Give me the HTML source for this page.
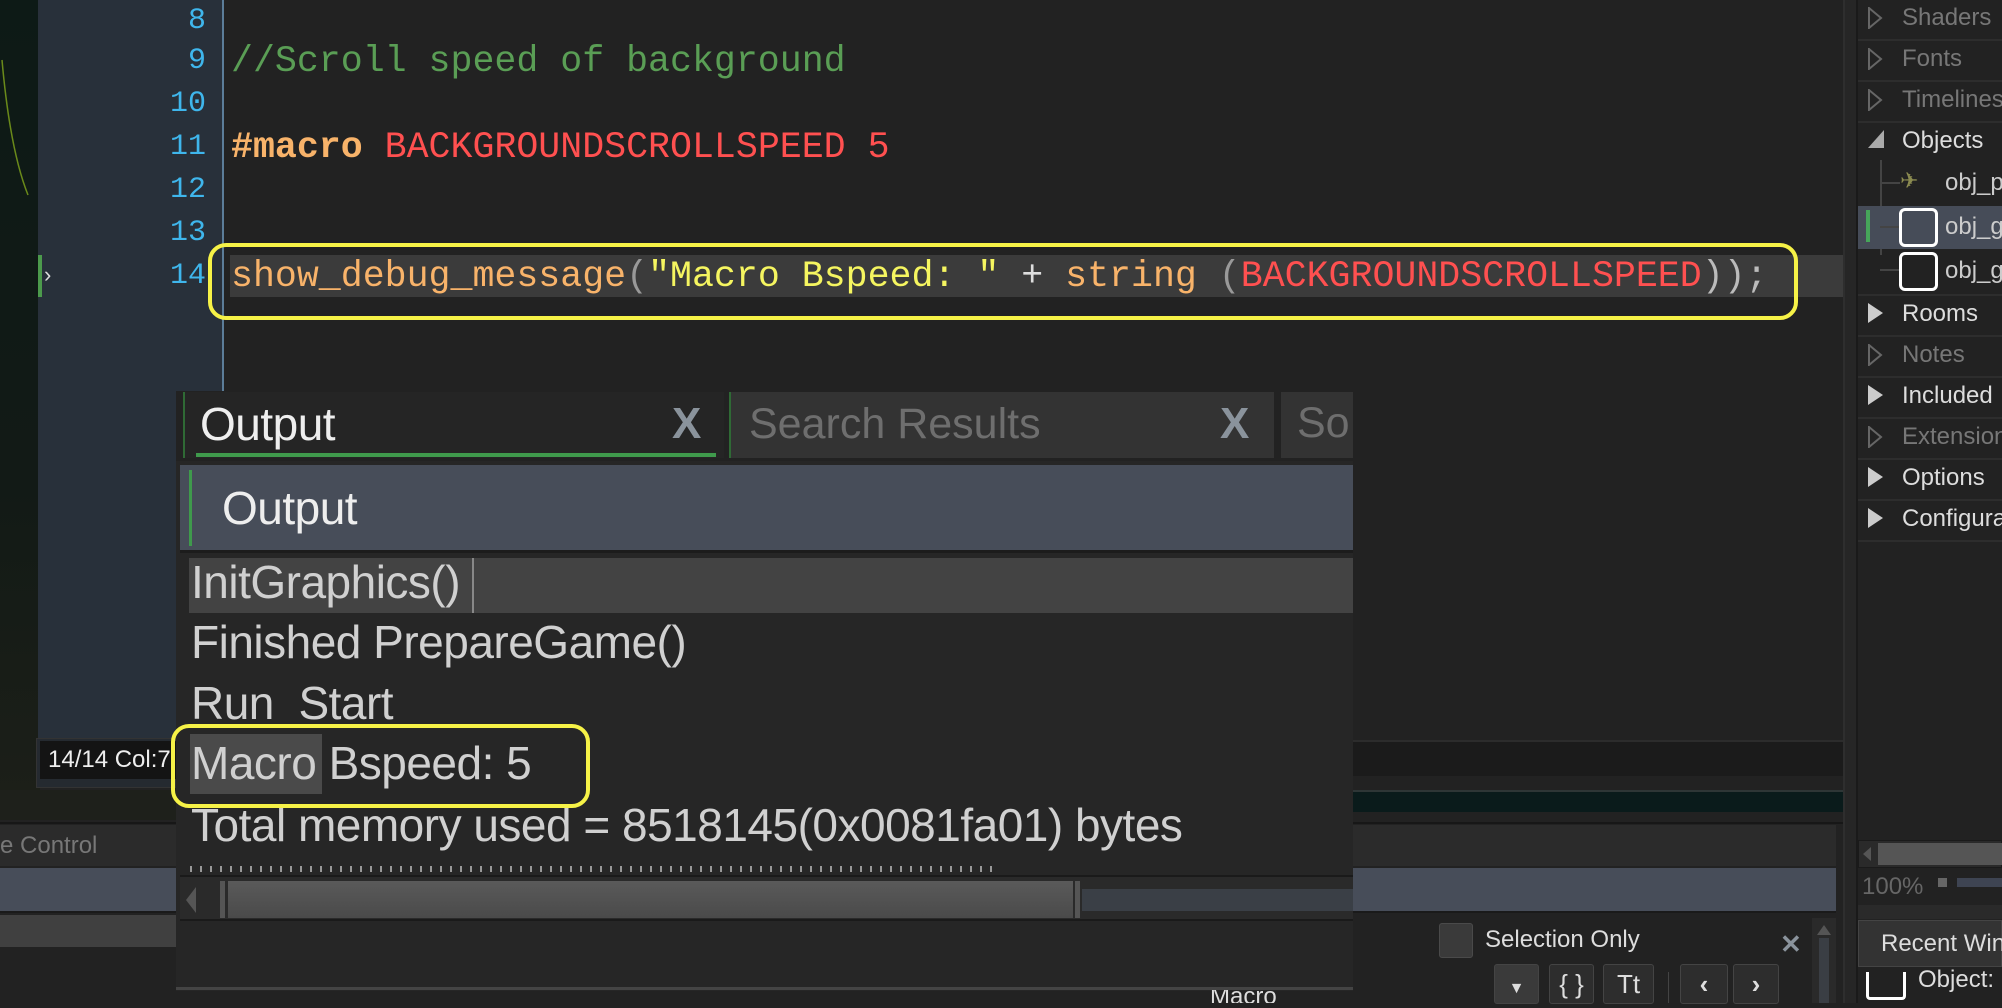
<!DOCTYPE html>
<html><head><meta charset="utf-8"><style>
*{margin:0;padding:0;box-sizing:border-box}
body{width:2002px;height:1003px;overflow:hidden;background:#222;position:relative;font-family:"Liberation Sans",sans-serif}
.a{position:absolute}
.mono{font-family:"Liberation Mono","DejaVu Sans Mono",monospace;font-size:36.6px;white-space:pre}
.ln{position:absolute;left:120px;width:86px;text-align:right;color:#3fb6ec;font-family:"Liberation Mono",monospace;font-size:30px;height:43px;line-height:43px}
.code{position:absolute;left:231px;height:43px;line-height:43px}
.tr{position:absolute;left:1902px;font-size:24px;height:41px;line-height:41px;white-space:nowrap}
.tri{position:absolute;left:1868px;width:0;height:0;border-top:10px solid transparent;border-bottom:10px solid transparent;border-left:15px solid #ccc}
.trio{position:absolute;left:1868px;width:15px;height:20px}
.sep{position:absolute;left:1858px;width:144px;height:2px;background:#2d2d2d}
.ol{position:absolute;left:191px;font-size:46px;color:#d0d0d0;height:60px;line-height:60px;white-space:nowrap;letter-spacing:-0.5px}
.btn{position:absolute;top:964px;height:40px;background:#2d2d2d;border:1px solid #444;border-radius:3px;color:#ddd;font-size:26px;text-align:center;line-height:38px}
</style></head><body>
<div class="a" style="left:0;top:0;width:40px;height:800px;background:linear-gradient(#0d1a16,#121a16 60%,#1c1f18)"></div>
<svg class="a" style="left:0;top:0" width="40" height="200"><path d="M2 60 Q10 150 28 195" stroke="#6a8a1a" stroke-width="1.5" fill="none"/></svg>
<div class="a" style="left:0;top:790px;width:176px;height:30px;background:#1e201b"></div>
<div class="a" style="left:38px;top:0;width:184px;height:745px;background:#28303a"></div>
<div class="a" style="left:222px;top:0;width:2px;height:391px;background:#5c7d98"></div>
<div class="a" style="left:38px;top:255px;width:4px;height:42px;background:#4c9a4c"></div>
<div class="a" style="left:44px;top:262px;color:#ddd;font-size:22px">›</div>
<div class="a" style="left:36px;top:738px;width:140px;height:50px;background:#252a30;border:1px solid #333"></div>
<div class="a" style="left:40px;top:741px;width:136px;height:38px;background:#141414;color:#eee;font-size:24px;line-height:38px;padding-left:8px;white-space:nowrap;overflow:hidden">14/14 Col:7</div>
<div class="ln" style="top:0px">8</div>
<div class="ln" style="top:40px">9</div>
<div class="ln" style="top:83px">10</div>
<div class="ln" style="top:126px">11</div>
<div class="ln" style="top:169px">12</div>
<div class="ln" style="top:212px">13</div>
<div class="ln" style="top:255px">14</div>
<div class="a" style="left:230px;top:255px;width:1613px;height:42px;background:#3b3b3b"></div>
<div class="code mono" style="top:40px;color:#5a9e55">//Scroll speed of background</div>
<div class="code mono" style="top:126px"><span style="color:#f8b36a;font-weight:bold">#macro</span> <span style="color:#ff5050">BACKGROUNDSCROLLSPEED 5</span></div>
<div class="code mono" style="top:255px"><span style="color:#f8b36a">show_debug_message</span><span style="color:#999">(</span><span style="color:#f5f560">"Macro Bspeed: "</span><span style="color:#ddd"> + </span><span style="color:#f8b36a">string</span> <span style="color:#999">(</span><span style="color:#ff5050">BACKGROUNDSCROLLSPEED</span><span style="color:#bbb">));</span></div>
<div class="a" style="left:208px;top:243px;width:1590px;height:77px;border:4px solid #f6f247;border-radius:18px"></div>
<div class="a" style="left:1353px;top:740px;width:490px;height:36px;background:#1b1b1b;border-top:2px solid #2c2c2c"></div>
<div class="a" style="left:1353px;top:790px;width:490px;height:22px;background:#0a1b1b;border-top:2px solid #2e3636"></div>
<div class="a" style="left:0;top:822px;width:1843px;height:2px;background:#171717"></div>
<div class="a" style="left:0;top:825px;width:1836px;height:41px;background:#2b2b2b"></div>
<div class="a" style="left:0;top:831px;color:#777;font-size:24px;line-height:30px">e Control</div>
<div class="a" style="left:0;top:868px;width:1836px;height:45px;background:#474d59;border-bottom:2px solid #1a1a1a"></div>
<div class="a" style="left:0;top:915px;width:176px;height:32px;background:#404040"></div>
<div class="a" style="left:1439px;top:923px;width:34px;height:35px;background:#3a3a3a;border:1px solid #4a4a4a;border-radius:3px"></div>
<div class="a" style="left:1485px;top:925px;color:#ddd;font-size:24px;line-height:30px">Selection Only</div>
<div class="a" style="left:1780px;top:929px;color:#8a939c;font-size:26px;font-weight:bold">✕</div>
<div class="a" style="left:1812px;top:918px;width:24px;height:85px;background:#2a2a2a"></div>
<div class="a" style="left:1817px;top:925px;width:0;height:0;border-left:7px solid transparent;border-right:7px solid transparent;border-bottom:10px solid #555"></div>
<div class="a" style="left:1819px;top:938px;width:10px;height:65px;background:#3a3e44"></div>
<div class="btn" style="left:1494px;width:45px;background:#3a3a3a"><span style="font-size:16px">▼</span></div>
<div class="btn" style="left:1549px;width:45px">{ }</div>
<div class="btn" style="left:1603px;width:51px">Tt</div>
<div class="a" style="left:1668px;top:972px;width:1px;height:31px;background:#444"></div>
<div class="btn" style="left:1680px;width:48px;font-weight:bold">‹</div>
<div class="btn" style="left:1733px;width:46px;font-weight:bold">›</div>
<div class="a" style="left:1843px;top:0;width:15px;height:1003px;background:#262626;border-left:2px solid #2e2e2e;border-right:2px solid #1a1a1a"></div>
<div class="a" style="left:1858px;top:0;width:144px;height:1003px;background:#222"></div>
<div class="trio" style="top:7px"><svg width="15" height="22"><path d="M1 1 L13 11 L1 21 Z" fill="none" stroke="#666" stroke-width="2"/></svg></div>
<div class="tr" style="top:-3px;color:#777">Shaders</div><div class="sep" style="top:39px"></div>
<div class="trio" style="top:48px"><svg width="15" height="22"><path d="M1 1 L13 11 L1 21 Z" fill="none" stroke="#666" stroke-width="2"/></svg></div>
<div class="tr" style="top:38px;color:#777">Fonts</div><div class="sep" style="top:80px"></div>
<div class="trio" style="top:89px"><svg width="15" height="22"><path d="M1 1 L13 11 L1 21 Z" fill="none" stroke="#666" stroke-width="2"/></svg></div>
<div class="tr" style="top:79px;color:#777">Timelines</div><div class="sep" style="top:121px"></div>
<div class="a" style="left:1868px;top:130px;width:0;height:0;border-left:16px solid transparent;border-bottom:18px solid #aaa"></div>
<div class="tr" style="top:120px;color:#ddd">Objects</div>
<div class="a" style="left:1880px;top:160px;width:2px;height:95px;background:#444"></div>
<div class="a" style="left:1880px;top:182px;width:20px;height:2px;background:#444"></div>
<div class="a" style="left:1900px;top:168px;color:#8a8a50;font-size:22px">✈</div>
<div class="tr" style="left:1945px;top:162px;color:#ccc">obj_p</div>
<div class="a" style="left:1858px;top:206px;width:144px;height:43px;background:#464c58"></div>
<div class="a" style="left:1866px;top:210px;width:4px;height:32px;background:#46a65a"></div>
<div class="a" style="left:1880px;top:226px;width:20px;height:2px;background:#444"></div>
<div class="a" style="left:1899px;top:208px;width:39px;height:39px;border:3px solid #fff;border-radius:6px"></div>
<div class="tr" style="left:1945px;top:206px;color:#ccc">obj_g</div>
<div class="a" style="left:1880px;top:269px;width:20px;height:2px;background:#444"></div>
<div class="a" style="left:1899px;top:252px;width:39px;height:39px;border:3px solid #fff;border-radius:6px"></div>
<div class="tr" style="left:1945px;top:250px;color:#ccc">obj_g</div>
<div class="sep" style="top:294px"></div>
<div class="tri" style="top:303px"></div><div class="tr" style="top:293px;color:#ddd">Rooms</div><div class="sep" style="top:335px"></div>
<div class="trio" style="top:344px"><svg width="15" height="22"><path d="M1 1 L13 11 L1 21 Z" fill="none" stroke="#666" stroke-width="2"/></svg></div>
<div class="tr" style="top:334px;color:#777">Notes</div><div class="sep" style="top:376px"></div>
<div class="tri" style="top:385px"></div><div class="tr" style="top:375px;color:#ddd">Included</div><div class="sep" style="top:417px"></div>
<div class="trio" style="top:426px"><svg width="15" height="22"><path d="M1 1 L13 11 L1 21 Z" fill="none" stroke="#666" stroke-width="2"/></svg></div>
<div class="tr" style="top:416px;color:#777">Extensions</div><div class="sep" style="top:458px"></div>
<div class="tri" style="top:467px"></div><div class="tr" style="top:457px;color:#ddd">Options</div><div class="sep" style="top:499px"></div>
<div class="tri" style="top:508px"></div><div class="tr" style="top:498px;color:#ddd">Configuration</div><div class="sep" style="top:540px"></div>
<div class="a" style="left:1858px;top:840px;width:144px;height:28px;background:#2a2a2a;border:1px solid #1a1a1a"></div>
<div class="a" style="left:1863px;top:847px;width:0;height:0;border-top:7px solid transparent;border-bottom:7px solid transparent;border-right:8px solid #555"></div>
<div class="a" style="left:1878px;top:843px;width:124px;height:22px;background:#555"></div>
<div class="a" style="left:1862px;top:872px;color:#666;font-size:24px;line-height:30px">100%</div>
<div class="a" style="left:1938px;top:878px;width:9px;height:9px;background:#666"></div>
<div class="a" style="left:1957px;top:878px;width:45px;height:9px;background:#3e4452"></div>
<div class="a" style="left:1858px;top:905px;width:144px;height:14px;background:#2a2a2a"></div>
<div class="a" style="left:1858px;top:920px;width:144px;height:47px;background:#333;border:1px solid #444;color:#ddd;font-size:24px;line-height:45px;padding-left:22px;white-space:nowrap">Recent Windows</div>
<div class="a" style="left:1866px;top:972px;width:40px;height:28px;border:3px solid #fff;border-top:none;border-radius:0 0 4px 4px"></div>
<div class="a" style="left:1918px;top:965px;color:#ddd;font-size:24px;line-height:30px">Object:</div>
<div class="a" style="left:176px;top:391px;width:1177px;height:600px;background:#262626"></div>
<div class="a" style="left:176px;top:391px;width:1177px;height:70px;background:#222"></div>
<div class="a" style="left:183px;top:392px;width:541px;height:66px;background:#252525;border-left:2px solid #2f6a35"></div>
<div class="a" style="left:196px;top:453px;width:520px;height:4px;background:#3f9a4c"></div>
<div class="a" style="left:200px;top:396px;color:#eee;font-size:46px;line-height:56px;letter-spacing:-0.5px">Output</div>
<div class="a" style="left:672px;top:396px;color:#8a939c;font-size:44px;font-weight:bold;line-height:56px">X</div>
<div class="a" style="left:729px;top:392px;width:545px;height:66px;background:#333;border-left:2px solid #2f6a35"></div>
<div class="a" style="left:749px;top:396px;color:#6e6e6e;font-size:43px;line-height:56px">Search Results</div>
<div class="a" style="left:1220px;top:396px;color:#8a939c;font-size:44px;font-weight:bold;line-height:56px">X</div>
<div class="a" style="left:1281px;top:392px;width:72px;height:66px;background:#333;overflow:hidden;color:#6e6e6e;font-size:43px;line-height:62px;padding-left:16px">So</div>
<div class="a" style="left:180px;top:465px;width:1173px;height:88px;background:#474d59;border-bottom:3px solid #1c1c1c"></div>
<div class="a" style="left:189px;top:470px;width:3px;height:76px;background:#3f9a4c"></div>
<div class="a" style="left:222px;top:480px;color:#eee;font-size:46px;line-height:56px;letter-spacing:-0.5px">Output</div>
<div class="a" style="left:189px;top:558px;width:1164px;height:55px;background:#434343"></div>
<div class="a" style="left:472px;top:558px;width:2px;height:55px;background:#888"></div>
<div class="a" style="left:190px;top:734px;width:132px;height:60px;background:#4a4a4a"></div>
<div class="ol" style="top:552px">InitGraphics()</div>
<div class="ol" style="top:612px">Finished PrepareGame()</div>
<div class="ol" style="top:673px">Run&nbsp; Start</div>
<div class="ol" style="top:733px">Macro Bspeed: 5</div>
<div class="ol" style="top:795px">Total memory used = 8518145(0x0081fa01) bytes</div>
<div class="a" style="left:171px;top:724px;width:419px;height:84px;border:4px solid #f6f247;border-radius:18px"></div>
<div class="a" style="left:190px;top:866px;width:806px;height:6px;background:repeating-linear-gradient(90deg,#999 0 2px,transparent 2px 10px)"></div>
<div class="a" style="left:180px;top:875px;width:1173px;height:46px;background:#2a2a2a;border-top:2px solid #1a1a1a;border-bottom:2px solid #1a1a1a"></div>
<div class="a" style="left:186px;top:887px;width:0;height:0;border-top:13px solid transparent;border-bottom:13px solid transparent;border-right:10px solid #555"></div>
<div class="a" style="left:220px;top:881px;width:5px;height:37px;background:#555"></div>
<div class="a" style="left:228px;top:881px;width:845px;height:37px;background:linear-gradient(#5a5a5a,#4a4a4a)"></div>
<div class="a" style="left:1075px;top:881px;width:5px;height:37px;background:#555"></div>
<div class="a" style="left:1082px;top:889px;width:271px;height:22px;background:#3a3f46"></div>
<div class="a" style="left:176px;top:987px;width:1177px;height:3px;background:#444"></div>
<div class="a" style="left:1210px;top:990px;color:#ddd;font-size:24px;line-height:14px;overflow:hidden;height:13px">Macro</div>
</body></html>
